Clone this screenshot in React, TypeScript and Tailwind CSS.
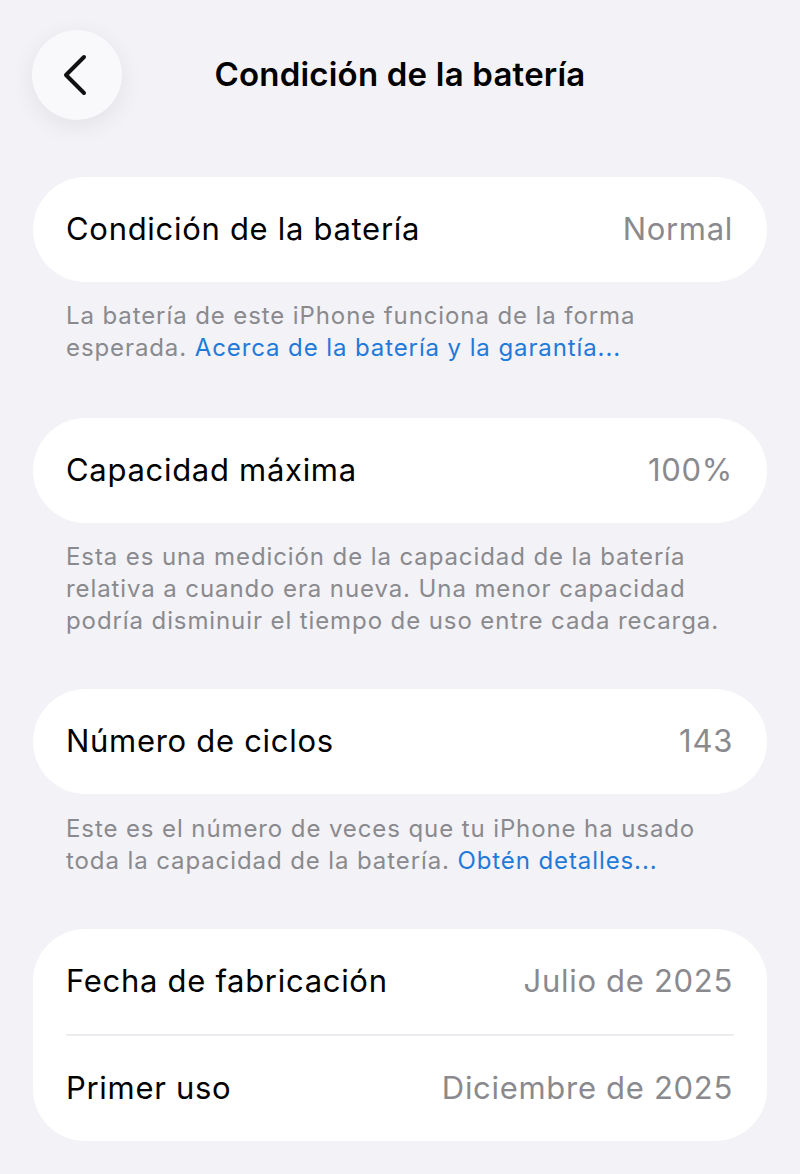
import React from "react";

function Row({ label, value }: { label: string; value: string }) {
  return (
    <div className="flex h-[105px] items-center justify-between pl-[33px] pr-[34px]">
      <span className="text-[31px] text-black tracking-[0.7px]">{label}</span>
      <span className="text-[31px] text-[#8a8a8e] tracking-[0.7px]">{value}</span>
    </div>
  );
}

export default function App() {
  return (
    <div
      className="min-h-[1174px] w-[800px] bg-[#f2f2f7] overflow-hidden"
      style={{ fontFamily: "Inter, 'Noto Sans', sans-serif" }}
    >
      <div className="relative flex h-[150px] items-start">
        <button className="ml-[32px] mt-[30px] flex h-[90px] w-[90px] items-center justify-center rounded-full bg-[#f9f9fb] shadow-[0_6px_24px_rgba(0,0,0,0.07)]">
          <svg width="40" height="44" viewBox="0 0 40 44" fill="none">
            <path d="M27 4 L9 22 L27 40" stroke="#111" strokeWidth="4" strokeLinecap="round" strokeLinejoin="round" />
          </svg>
        </button>
        <div className="absolute left-0 right-0 top-[50px] text-center text-[33px] font-semibold text-black tracking-[0.2px]">
          Condición de la batería
        </div>
      </div>

      <div className="mx-[33px] mt-[27px] rounded-full bg-white">
        <Row label="Condición de la batería" value="Normal" />
      </div>
      <p className="px-[66px] pt-[18px] text-[24px] leading-[32px] tracking-[0.9px] text-[#8a8a8e]">
        La batería de este iPhone funciona de la forma
        <br />
        esperada. <span className="text-[#1f7ad9]">Acerca de la batería y la garantía...</span>
      </p>

      <div className="mx-[33px] mt-[54px] rounded-full bg-white">
        <Row label="Capacidad máxima" value="100%" />
      </div>
      <p className="px-[66px] pt-[18px] text-[24px] leading-[32px] tracking-[0.9px] text-[#8a8a8e]">
        Esta es una medición de la capacidad de la batería
        <br />
        relativa a cuando era nueva. Una menor capacidad
        <br />
        podría disminuir el tiempo de uso entre cada recarga.
      </p>

      <div className="mx-[33px] mt-[52px] rounded-full bg-white">
        <Row label="Número de ciclos" value="143" />
      </div>
      <p className="px-[66px] pt-[19px] text-[24px] leading-[32px] tracking-[0.9px] text-[#8a8a8e]">
        Este es el número de veces que tu iPhone ha usado
        <br />
        toda la capacidad de la batería. <span className="text-[#1f7ad9]">Obtén detalles...</span>
      </p>

      <div className="mx-[33px] mt-[52px] rounded-[52px] bg-white">
        <Row label="Fecha de fabricación" value="Julio de 2025" />
        <div className="ml-[33px] mr-[33px] h-[2px] bg-[#ececf0]" />
        <Row label="Primer uso" value="Diciembre de 2025" />
      </div>
    </div>
  );
}
